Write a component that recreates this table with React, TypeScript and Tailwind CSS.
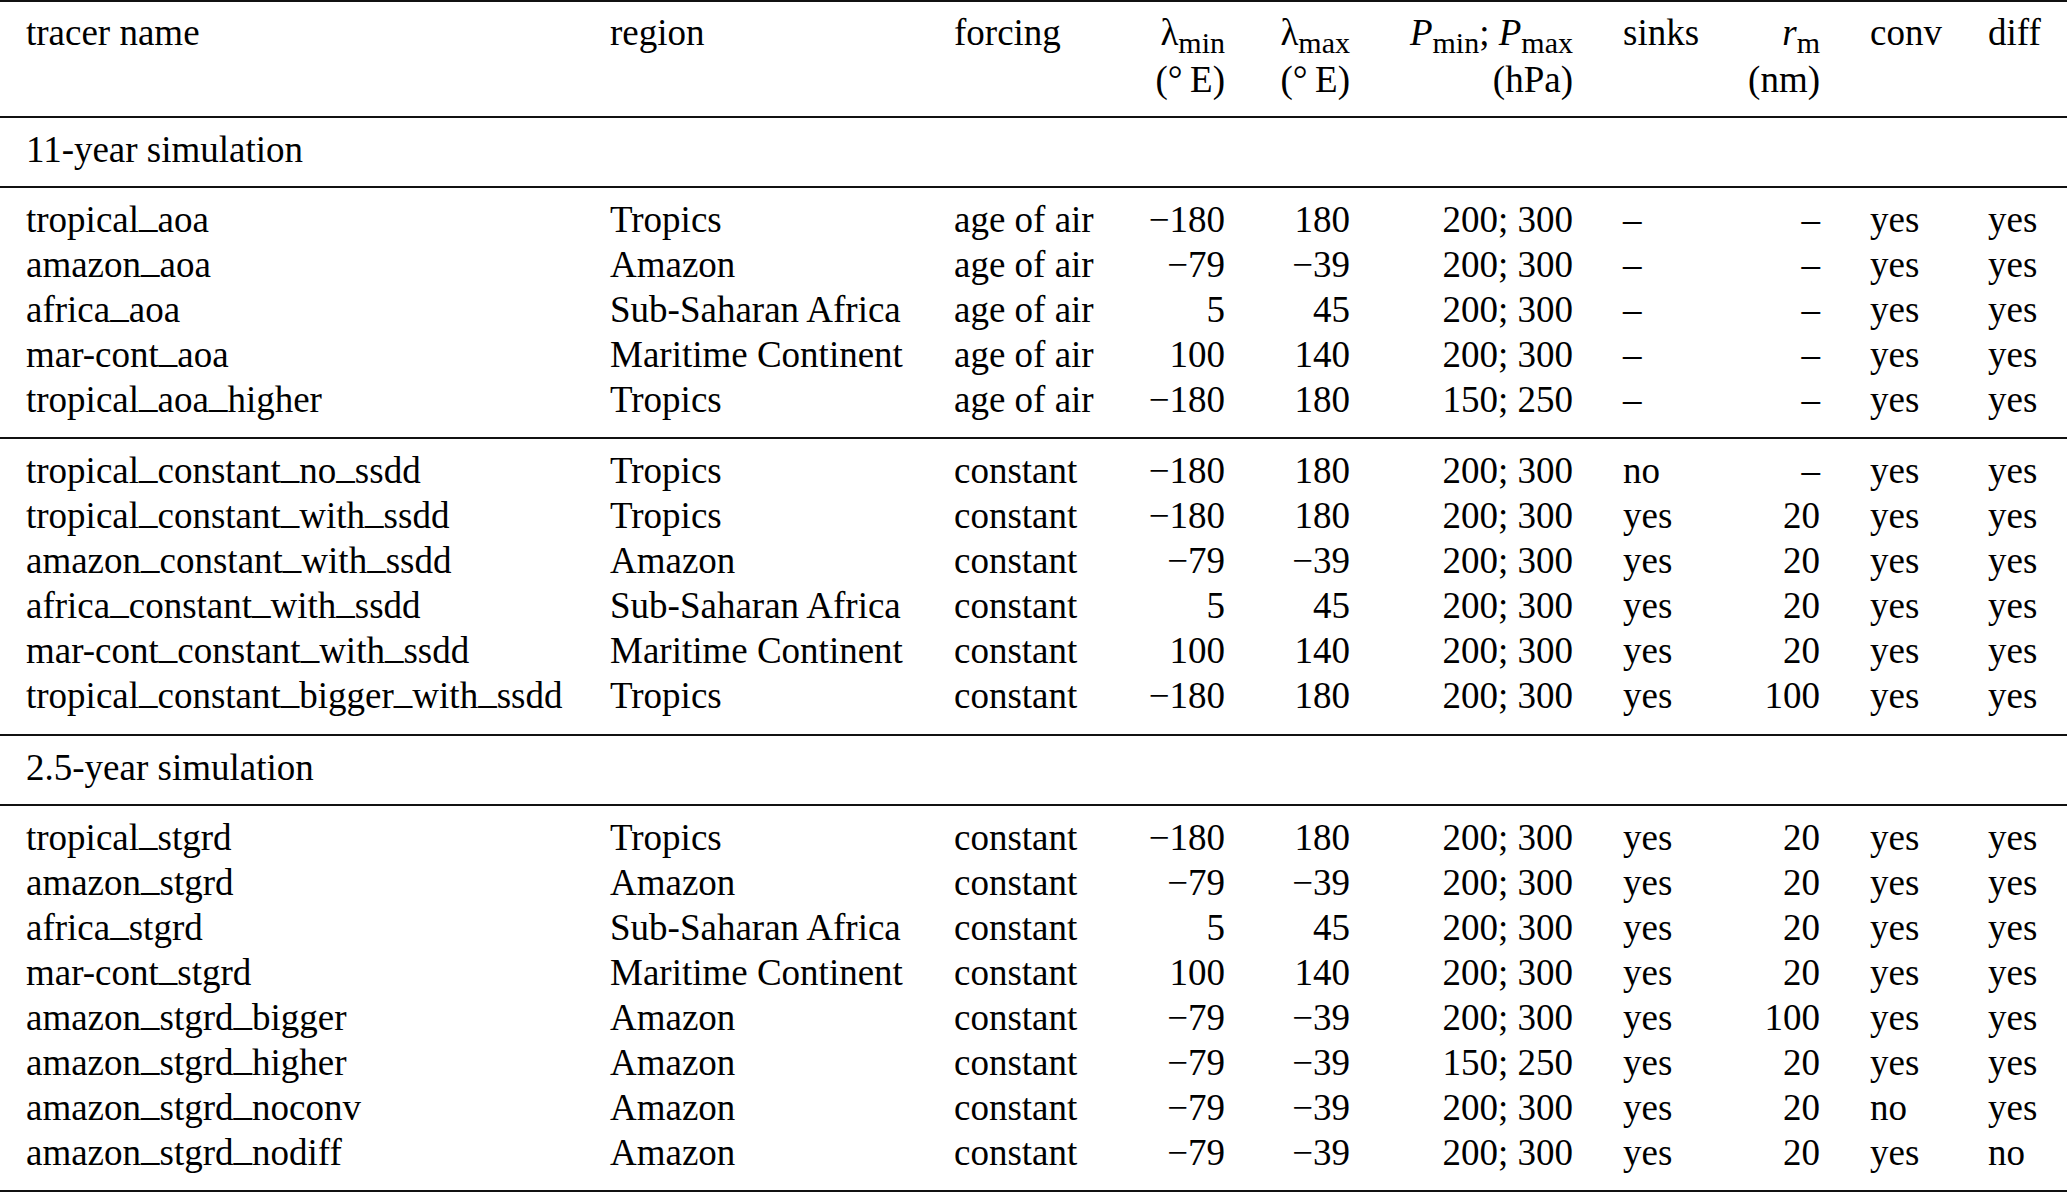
import React, { Fragment } from "react";

const COLS =
  "grid grid-cols-[610px_344px_176px_95px_125px_223px_147px_100px_168px_79px]";

const ALIGN = [
  "pl-[26px]",
  "",
  "",
  "text-right",
  "text-right",
  "text-right",
  "pl-[50px]",
  "text-right",
  "pl-[50px]",
  "",
];

const M = "\u2212";
const D = "\u2013";

type Row = string[];

const block1: Row[] = [
  ["tropical_aoa", "Tropics", "age of air", M + "180", "180", "200; 300", D, D, "yes", "yes"],
  ["amazon_aoa", "Amazon", "age of air", M + "79", M + "39", "200; 300", D, D, "yes", "yes"],
  ["africa_aoa", "Sub-Saharan Africa", "age of air", "5", "45", "200; 300", D, D, "yes", "yes"],
  ["mar-cont_aoa", "Maritime Continent", "age of air", "100", "140", "200; 300", D, D, "yes", "yes"],
  ["tropical_aoa_higher", "Tropics", "age of air", M + "180", "180", "150; 250", D, D, "yes", "yes"],
];

const block2: Row[] = [
  ["tropical_constant_no_ssdd", "Tropics", "constant", M + "180", "180", "200; 300", "no", D, "yes", "yes"],
  ["tropical_constant_with_ssdd", "Tropics", "constant", M + "180", "180", "200; 300", "yes", "20", "yes", "yes"],
  ["amazon_constant_with_ssdd", "Amazon", "constant", M + "79", M + "39", "200; 300", "yes", "20", "yes", "yes"],
  ["africa_constant_with_ssdd", "Sub-Saharan Africa", "constant", "5", "45", "200; 300", "yes", "20", "yes", "yes"],
  ["mar-cont_constant_with_ssdd", "Maritime Continent", "constant", "100", "140", "200; 300", "yes", "20", "yes", "yes"],
  ["tropical_constant_bigger_with_ssdd", "Tropics", "constant", M + "180", "180", "200; 300", "yes", "100", "yes", "yes"],
];

const block3: Row[] = [
  ["tropical_stgrd", "Tropics", "constant", M + "180", "180", "200; 300", "yes", "20", "yes", "yes"],
  ["amazon_stgrd", "Amazon", "constant", M + "79", M + "39", "200; 300", "yes", "20", "yes", "yes"],
  ["africa_stgrd", "Sub-Saharan Africa", "constant", "5", "45", "200; 300", "yes", "20", "yes", "yes"],
  ["mar-cont_stgrd", "Maritime Continent", "constant", "100", "140", "200; 300", "yes", "20", "yes", "yes"],
  ["amazon_stgrd_bigger", "Amazon", "constant", M + "79", M + "39", "200; 300", "yes", "100", "yes", "yes"],
  ["amazon_stgrd_higher", "Amazon", "constant", M + "79", M + "39", "150; 250", "yes", "20", "yes", "yes"],
  ["amazon_stgrd_noconv", "Amazon", "constant", M + "79", M + "39", "200; 300", "yes", "20", "no", "yes"],
  ["amazon_stgrd_nodiff", "Amazon", "constant", M + "79", M + "39", "200; 300", "yes", "20", "yes", "no"],
];

function Name({ s }: { s: string }) {
  const parts = s.split("_");
  return (
    <>
      {parts.map((p, i) => (
        <Fragment key={i}>
          {i > 0 && <span className="relative top-[-5px]">_</span>}
          {p}
        </Fragment>
      ))}
    </>
  );
}

function Sub({ children }: { children: React.ReactNode }) {
  return (
    <span className="relative top-[8px] text-[30px] leading-none">{children}</span>
  );
}

function Rule() {
  return <div className="h-[2px] bg-[#111]" />;
}

function Block({ rows, pb }: { rows: Row[]; pb: string }) {
  return (
    <div className={`${COLS} pt-[9px] ${pb}`}>
      {rows.map((r, ri) =>
        r.map((c, ci) => (
          <div
            key={ri + "-" + ci}
            className={`${ALIGN[ci]} leading-[45px] h-[45px] whitespace-nowrap`}
          >
            {ci === 0 ? <Name s={c} /> : c}
          </div>
        ))
      )}
    </div>
  );
}

function Section({ title }: { title: string }) {
  return (
    <div className="pt-[9px] pb-[14px] pl-[26px]">
      <div className="leading-[45px] h-[45px] whitespace-nowrap">{title}</div>
    </div>
  );
}

function HCell({
  i,
  l1,
  l2,
}: {
  i: number;
  l1: React.ReactNode;
  l2?: React.ReactNode;
}) {
  return (
    <div className={`${ALIGN[i]} flex flex-col whitespace-nowrap`}>
      <div className="leading-[47px] h-[47px]">{l1}</div>
      {l2 && <div className="leading-[47px] h-[47px]">{l2}</div>}
    </div>
  );
}

const DEG = "(\u00b0\u2009E)";

export default function App() {
  return (
    <div className="w-[2067px] h-[1193px] overflow-hidden bg-white text-black font-['Liberation_Serif','Times_New_Roman',serif] text-[37px]">
      <Rule />
      <div className={`${COLS} pt-[7px] pb-[13px]`}>
        <HCell i={0} l1="tracer name" />
        <HCell i={1} l1="region" />
        <HCell i={2} l1="forcing" />
        <HCell
          i={3}
          l1={
            <>
              λ<Sub>min</Sub>
            </>
          }
          l2={DEG}
        />
        <HCell
          i={4}
          l1={
            <>
              λ<Sub>max</Sub>
            </>
          }
          l2={DEG}
        />
        <HCell
          i={5}
          l1={
            <>
              <i>P</i>
              <Sub>min</Sub>; <i>P</i>
              <Sub>max</Sub>
            </>
          }
          l2="(hPa)"
        />
        <HCell i={6} l1="sinks" />
        <HCell
          i={7}
          l1={
            <>
              <i>r</i>
              <Sub>m</Sub>
            </>
          }
          l2="(nm)"
        />
        <HCell i={8} l1="conv" />
        <HCell i={9} l1="diff" />
      </div>
      <Rule />
      <Section title="11-year simulation" />
      <Rule />
      <Block rows={block1} pb="pb-[15px]" />
      <Rule />
      <Block rows={block2} pb="pb-[16px]" />
      <Rule />
      <Section title="2.5-year simulation" />
      <Rule />
      <Block rows={block3} pb="pb-[15px]" />
      <Rule />
    </div>
  );
}
